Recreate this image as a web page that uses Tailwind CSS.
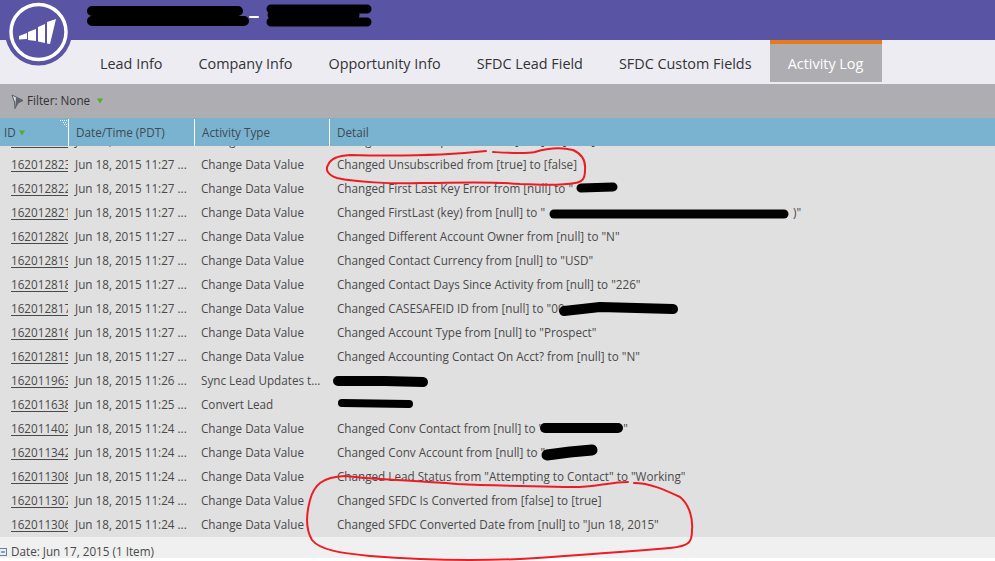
<!DOCTYPE html>
<html lang="en">
  <head>
    <meta charset="UTF-8" />
    <title>Activity Log</title>
    <script src="https://cdn.jsdelivr.net/npm/@tailwindcss/browser@4"></script>
  </head>
  <body class="w-[995px] h-[561px] overflow-hidden bg-white font-['Open_Sans',sans-serif] text-[11.7px] text-[#4a4a4a]">
    <div class="relative h-[561px] flex flex-col">
      <!-- header -->
      <div class="h-[40px] bg-[#5a54a4] shrink-0"></div>

      <!-- tabs -->
      <div class="h-[44px] bg-[#edecf3] pl-[82px] flex items-start text-[14.4px] text-[#333] shrink-0">
        <div class="h-[42px] px-[18px] pt-[14px] leading-[20px]">Lead Info</div>
        <div class="h-[42px] px-[18px] pt-[14px] leading-[20px]">Company Info</div>
        <div class="h-[42px] px-[18px] pt-[14px] leading-[20px]">Opportunity Info</div>
        <div class="h-[42px] px-[18px] pt-[14px] leading-[20px]">SFDC Lead Field</div>
        <div class="h-[42px] px-[18px] pt-[14px] leading-[20px]">SFDC Custom Fields</div>
        <div class="h-[42px] w-[112px] bg-[#aeadb1] border-t-4 border-[#e57a1f] text-white text-center pt-[10px] leading-[20px]">Activity Log</div>
      </div>

      <!-- filter bar -->
      <div class="h-[34px] bg-[#aeadb1] flex items-center pl-[11px] gap-[3px] text-[#333] shrink-0">
        <svg width="13" height="15" viewBox="0 0 13 15"><path d="M1 1 L12 6.5 L7 9 L4 14.5 L3.5 8 Z" fill="#dde3e8" stroke="#555b61" stroke-width="1" /><path d="M5 3 L12 6.5 L7 9 L4 14.5 Z" fill="#5d646b" /></svg>
        <span>Filter: None</span>
        <svg class="ml-[4px]" width="6" height="6" viewBox="0 0 6 6"><path d="M0 0.5 H6 L3 5.5 Z" fill="#4fae2c" /></svg>
      </div>

      <!-- grid header -->
      <div class="h-[28px] bg-[#7ab3cf] grid grid-cols-[69px_126px_135px_1fr] text-[#3f4a52] shrink-0">
        <div class="relative border-r border-white mt-[1px] pl-[4px] flex items-center gap-[3px]">
          ID
          <svg width="6" height="6" viewBox="0 0 6 6"><path d="M0 0.5 H6 L3 5.5 Z" fill="#4fae2c" /></svg>
          <svg class="absolute top-[1px] right-[1px]" width="7" height="7" viewBox="0 0 7 7" fill="#fff"><path d="M0 0h1v1H0z M2 0h1v1H2z M4 0h1v1H4z M6 0h1v1H6z M3 2h1v1H3z M5 2h1v1H5z M4 4h1v1H4z M6 4h1v1H6z M6 6h1v1H6z" /></svg>
        </div>
        <div class="border-r border-white mt-[1px] pl-[7px] flex items-center">Date/Time (PDT)</div>
        <div class="border-r border-white mt-[1px] pl-[7px] flex items-center">Activity Type</div>
        <div class="mt-[1px] pl-[7px] flex items-center">Detail</div>
      </div>

      <!-- rows -->
      <div class="h-[391px] bg-[#e0e0e0] overflow-hidden shrink-0">
        <div class="mt-[-17px]">
          <div class="h-[24px] grid grid-cols-[68px_126px_136px_1fr] items-center"><div class="pl-[11px] overflow-hidden whitespace-nowrap underline underline-offset-[2px]">162012824</div><div class="pl-[7px]">Jun 18, 2015 11:27 ...</div><div class="pl-[7px]">Change Data Value</div><div class="pl-[7px]">Changed Email Suspended from [true] to [false]</div></div>
          <div class="h-[24px] grid grid-cols-[68px_126px_136px_1fr] items-center"><div class="pl-[11px] overflow-hidden whitespace-nowrap underline underline-offset-[2px]">162012823</div><div class="pl-[7px]">Jun 18, 2015 11:27 ...</div><div class="pl-[7px]">Change Data Value</div><div class="pl-[7px]">Changed Unsubscribed from [true] to [false]</div></div>
          <div class="h-[24px] grid grid-cols-[68px_126px_136px_1fr] items-center"><div class="pl-[11px] overflow-hidden whitespace-nowrap underline underline-offset-[2px]">162012822</div><div class="pl-[7px]">Jun 18, 2015 11:27 ...</div><div class="pl-[7px]">Change Data Value</div><div class="pl-[7px]">Changed First Last Key Error from [null] to "</div></div>
          <div class="h-[24px] grid grid-cols-[68px_126px_136px_1fr] items-center"><div class="pl-[11px] overflow-hidden whitespace-nowrap underline underline-offset-[2px]">162012821</div><div class="pl-[7px]">Jun 18, 2015 11:27 ...</div><div class="pl-[7px]">Change Data Value</div><div class="pl-[7px] whitespace-nowrap">Changed FirstLast (key) from [null] to "<span class="inline-block w-[248px]"></span>)"</div></div>
          <div class="h-[24px] grid grid-cols-[68px_126px_136px_1fr] items-center"><div class="pl-[11px] overflow-hidden whitespace-nowrap underline underline-offset-[2px]">162012820</div><div class="pl-[7px]">Jun 18, 2015 11:27 ...</div><div class="pl-[7px]">Change Data Value</div><div class="pl-[7px]">Changed Different Account Owner from [null] to "N"</div></div>
          <div class="h-[24px] grid grid-cols-[68px_126px_136px_1fr] items-center"><div class="pl-[11px] overflow-hidden whitespace-nowrap underline underline-offset-[2px]">162012819</div><div class="pl-[7px]">Jun 18, 2015 11:27 ...</div><div class="pl-[7px]">Change Data Value</div><div class="pl-[7px]">Changed Contact Currency from [null] to "USD"</div></div>
          <div class="h-[24px] grid grid-cols-[68px_126px_136px_1fr] items-center"><div class="pl-[11px] overflow-hidden whitespace-nowrap underline underline-offset-[2px]">162012818</div><div class="pl-[7px]">Jun 18, 2015 11:27 ...</div><div class="pl-[7px]">Change Data Value</div><div class="pl-[7px]">Changed Contact Days Since Activity from [null] to "226"</div></div>
          <div class="h-[24px] grid grid-cols-[68px_126px_136px_1fr] items-center"><div class="pl-[11px] overflow-hidden whitespace-nowrap underline underline-offset-[2px]">162012817</div><div class="pl-[7px]">Jun 18, 2015 11:27 ...</div><div class="pl-[7px]">Change Data Value</div><div class="pl-[7px]">Changed CASESAFEID ID from [null] to "00</div></div>
          <div class="h-[24px] grid grid-cols-[68px_126px_136px_1fr] items-center"><div class="pl-[11px] overflow-hidden whitespace-nowrap underline underline-offset-[2px]">162012816</div><div class="pl-[7px]">Jun 18, 2015 11:27 ...</div><div class="pl-[7px]">Change Data Value</div><div class="pl-[7px]">Changed Account Type from [null] to "Prospect"</div></div>
          <div class="h-[24px] grid grid-cols-[68px_126px_136px_1fr] items-center"><div class="pl-[11px] overflow-hidden whitespace-nowrap underline underline-offset-[2px]">162012815</div><div class="pl-[7px]">Jun 18, 2015 11:27 ...</div><div class="pl-[7px]">Change Data Value</div><div class="pl-[7px]">Changed Accounting Contact On Acct? from [null] to "N"</div></div>
          <div class="h-[24px] grid grid-cols-[68px_126px_136px_1fr] items-center"><div class="pl-[11px] overflow-hidden whitespace-nowrap underline underline-offset-[2px]">162011963</div><div class="pl-[7px]">Jun 18, 2015 11:26 ...</div><div class="pl-[7px] whitespace-nowrap">Sync Lead Updates t...</div><div class="pl-[7px]"></div></div>
          <div class="h-[24px] grid grid-cols-[68px_126px_136px_1fr] items-center"><div class="pl-[11px] overflow-hidden whitespace-nowrap underline underline-offset-[2px]">162011638</div><div class="pl-[7px]">Jun 18, 2015 11:25 ...</div><div class="pl-[7px]">Convert Lead</div><div class="pl-[7px]"></div></div>
          <div class="h-[24px] grid grid-cols-[68px_126px_136px_1fr] items-center"><div class="pl-[11px] overflow-hidden whitespace-nowrap underline underline-offset-[2px]">162011402</div><div class="pl-[7px]">Jun 18, 2015 11:24 ...</div><div class="pl-[7px]">Change Data Value</div><div class="pl-[7px] whitespace-nowrap">Changed Conv Contact from [null] to "<span class="inline-block w-[80px]"></span>"</div></div>
          <div class="h-[24px] grid grid-cols-[68px_126px_136px_1fr] items-center"><div class="pl-[11px] overflow-hidden whitespace-nowrap underline underline-offset-[2px]">162011342</div><div class="pl-[7px]">Jun 18, 2015 11:24 ...</div><div class="pl-[7px]">Change Data Value</div><div class="pl-[7px]">Changed Conv Account from [null] to "</div></div>
          <div class="h-[24px] grid grid-cols-[68px_126px_136px_1fr] items-center"><div class="pl-[11px] overflow-hidden whitespace-nowrap underline underline-offset-[2px]">162011308</div><div class="pl-[7px]">Jun 18, 2015 11:24 ...</div><div class="pl-[7px]">Change Data Value</div><div class="pl-[7px]">Changed Lead Status from "Attempting to Contact" to "Working"</div></div>
          <div class="h-[24px] grid grid-cols-[68px_126px_136px_1fr] items-center"><div class="pl-[11px] overflow-hidden whitespace-nowrap underline underline-offset-[2px]">162011307</div><div class="pl-[7px]">Jun 18, 2015 11:24 ...</div><div class="pl-[7px]">Change Data Value</div><div class="pl-[7px]">Changed SFDC Is Converted from [false] to [true]</div></div>
          <div class="h-[24px] grid grid-cols-[68px_126px_136px_1fr] items-center"><div class="pl-[11px] overflow-hidden whitespace-nowrap underline underline-offset-[2px]">162011306</div><div class="pl-[7px]">Jun 18, 2015 11:24 ...</div><div class="pl-[7px]">Change Data Value</div><div class="pl-[7px]">Changed SFDC Converted Date from [null] to "Jun 18, 2015"</div></div>
        </div>
      </div>

      <!-- group footer -->
      <div class="h-[21px] bg-[#f0f0f0] flex items-center gap-[4px] pt-[9px] shrink-0">
        <svg class="ml-[-1px]" width="8" height="8" viewBox="0 0 8 8"><rect x="0.5" y="0.5" width="7" height="7" fill="#e8eef5" stroke="#6b7f99" /><path d="M2 4 H6" stroke="#34507a" /></svg>
        <span>Date: Jun 17, 2015 (1 Item)</span>
      </div>

      <!-- logo over header and tabs -->
      <svg class="absolute left-0 top-0" width="80" height="70" viewBox="0 0 80 70">
        <circle cx="38.5" cy="32" r="33.5" fill="#5a54a4" />
        <circle cx="38.5" cy="32" r="27.5" fill="#5a54a4" stroke="#fff" stroke-width="3.5" />
        <path d="M19 36 L27 33 V39 L19 39.5 Z M28 32 L36 29 V41 L28 40 Z M38 27 L45 24 V43 L38 41.5 Z M47 22 L56 19 L50 44 L47 43.5 Z" fill="#fff" />
      </svg>

      <!-- marks drawn over the screenshot -->
      <svg class="absolute left-0 top-0 pointer-events-none" width="995" height="561" viewBox="0 0 995 561" fill="none" stroke-linecap="round" stroke-linejoin="round">
        <path d="M92 11 L238 11 M92 21 L244 21" stroke="#000" stroke-width="10" />
        <path d="M250 17 H258" stroke="#fff" stroke-width="2" />
        <path d="M271 9 L367 9 M272 15 L355 15 M271 22 L367 22" stroke="#000" stroke-width="9" />
        <path d="M581 188 L613 187" stroke="#000" stroke-width="9" />
        <path d="M554 214 L784 214" stroke="#000" stroke-width="9" />
        <path d="M564 311 L600 307 L673 309" stroke="#000" stroke-width="10" />
        <path d="M338 381 L385 381 L423 382" stroke="#000" stroke-width="10" />
        <path d="M342 403 L409 404" stroke="#000" stroke-width="8" />
        <path d="M545 428 L618 428" stroke="#000" stroke-width="10" />
        <path d="M547 455 L570 452 L592 450" stroke="#000" stroke-width="11" />
        <path d="M493 152 C510 153 525 154 535 152 C545 149 560 147 573 150 C582 154 586 160 585 170 C585 178 583 182 575 183 C560 186 540 185 520 184 C490 181 450 183 420 183 C390 184 355 182 337 178 C328 175 325 170 328 165 C331 158 338 156 350 155 C390 156 440 156 486 151" stroke="#ed1c24" stroke-width="2" />
        <path d="M634 483 C650 483 665 490 680 497 C690 505 693 520 692 530 C692 542 690 546 670 548 C620 552 570 556 520 559 C470 561 420 560 370 556 C340 553 320 550 312 540 C306 530 306 515 310 500 C314 485 322 477 345 476 C380 480 410 480 457 484 C500 486 540 486 570 487 C590 488 610 482 628 482" stroke="#ed1c24" stroke-width="2" />
      </svg>
    </div>
  </body>
</html>
